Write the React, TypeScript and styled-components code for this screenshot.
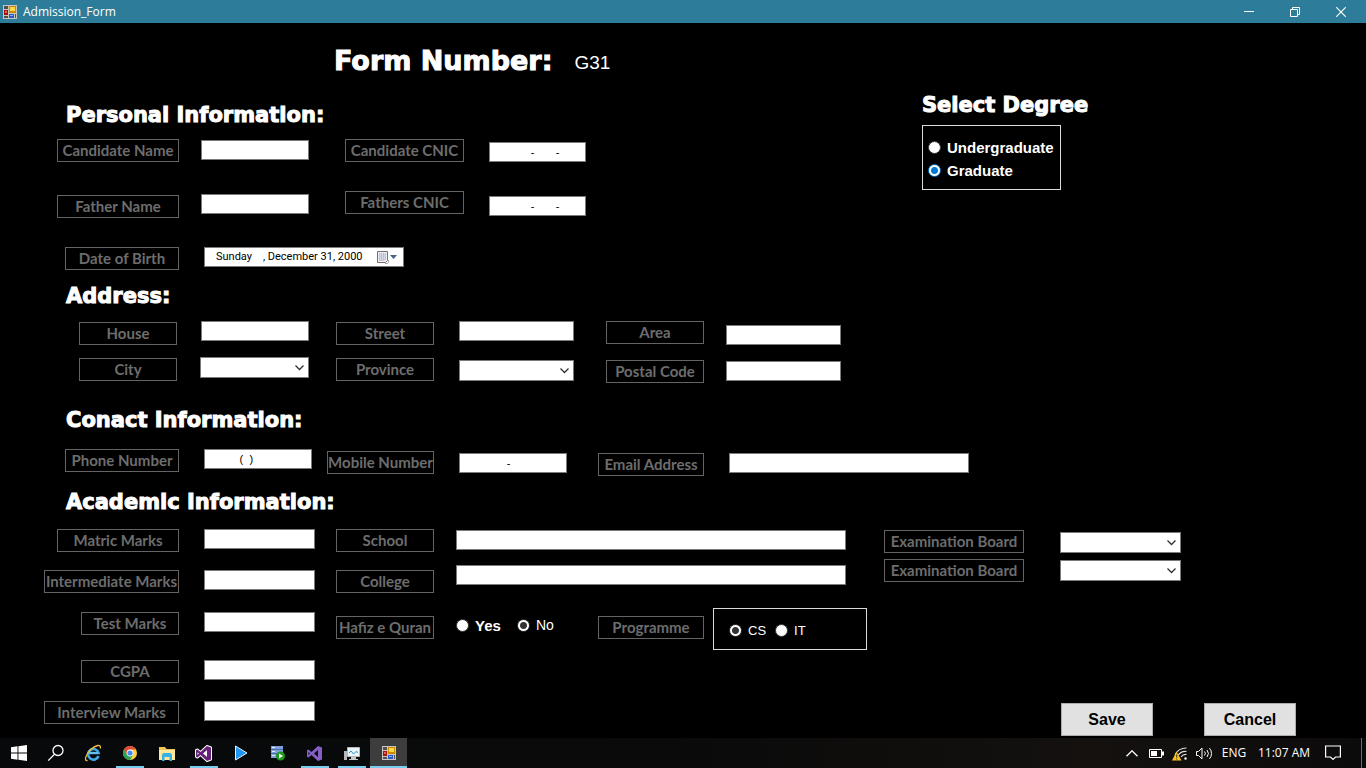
import React from "react";
import styled, { createGlobalStyle, css } from "styled-components";

const GlobalStyle = createGlobalStyle`
  * { box-sizing: border-box; }
  body { margin: 0; background: #000; color: #fff; font-family: "Liberation Sans", Arial, sans-serif; }
  button, input, select { font-family: inherit; border-radius: 0; }
`;

const Window = styled.div`
  min-height: 100vh;
  display: flex;
  flex-direction: column;
  background: #000;
`;

/* ---------- title bar ---------- */

const TitleBar = styled.header`
  display: flex;
  align-items: center;
  height: 23px;
  padding: 0 2px 0 3px;
  background: #2d7d9a;
`;

const WindowTitle = styled.span`
  flex: 1;
  padding-left: 6px;
  font: 12px/22px "Open Sans", "Noto Sans", sans-serif;
`;

const CaptionButton = styled.button`
  display: grid;
  place-items: center;
  width: 46px;
  height: 21px;
  padding: 0;
  border: 0;
  background: none;
  color: #fff;
`;

/* ---------- form layout ---------- */

const Form = styled.form`
  flex: 1;
  padding-left: 44px;
`;

const FormHeader = styled.div`
  display: flex;
  align-items: flex-start;
  gap: 22px;
  padding: 22px 0 18px 290px;
`;

const headingFont = css`
  margin: 0;
  font-family: "DejaVu Sans", Verdana, sans-serif;
  font-weight: 700;
  white-space: nowrap;
  -webkit-text-stroke: 1px #fff;
`;

const FormTitle = styled.h1`
  ${headingFont}
  font-size: 27px;
  line-height: 32px;
`;

const FormNumber = styled.output`
  font-size: 19px;
  line-height: 36px;
  height: 32px;
`;

const Heading = styled.h2`
  ${headingFont}
  font-size: 21px;
  line-height: 20px;
`;

const TopArea = styled.div`
  display: grid;
  grid-template-columns: 878px 1fr;
`;

const Section = styled.section<{ $top: number; $gap: number }>`
  padding-top: ${(p) => p.$top}px;
  & > ${Heading} {
    padding-left: 22px;
    margin-bottom: ${(p) => p.$gap}px;
  }
`;

const Fields = styled.div<{ $cols: string; $top?: number }>`
  display: grid;
  grid-template-columns: ${(p) => p.$cols};
  align-items: start;
  margin-top: ${(p) => p.$top ?? 0}px;
`;

const Stack = styled.div<{ $gap?: number; $top?: number; $width?: number }>`
  display: flex;
  flex-direction: column;
  align-items: ${(p) => (p.$width ? "flex-end" : "flex-start")};
  gap: ${(p) => p.$gap ?? 0}px;
  padding-top: ${(p) => p.$top ?? 0}px;
  width: ${(p) => (p.$width ? `${p.$width}px` : "auto")};
`;

const MarksGrid = styled.div`
  display: grid;
  grid-template-columns: 135px 111px;
  grid-template-rows: 41px 42px 48px 41px 23px;
  column-gap: 25px;
  justify-items: end;
  align-items: start;
`;

const RightColumn = styled.div`
  display: flex;
  flex-direction: column;
  justify-content: space-between;
  height: 207px;
`;

const Actions = styled.div`
  display: flex;
  gap: 51px;
  padding-left: 177px;
`;

/* ---------- controls ---------- */

const labelBox = css<{ $width: number }>`
  display: block;
  width: ${(p) => p.$width}px;
  height: 23px;
  border: 1px solid #646464;
  color: #6d6d6d;
  font: 700 15px/20px Lato, "Open Sans", sans-serif;
  text-align: center;
  white-space: nowrap;
`;

const Label = styled.label<{ $width: number }>`
  ${labelBox}
`;

const GroupLabel = styled.span<{ $width: number }>`
  ${labelBox}
`;

const TextBox = styled.input<{ $width: number }>`
  width: ${(p) => p.$width}px;
  height: 20px;
  padding: 0 1px;
  border: 1px solid #7a7a7a;
  background: #fff;
  color: #000;
  font-size: 11px;
  outline: 0;
`;

const SelectFrame = styled.div<{ $width: number }>`
  display: grid;
  width: ${(p) => p.$width}px;
  height: 21px;
  & > * {
    grid-area: 1 / 1;
  }
  & > svg {
    place-self: center end;
    margin-right: 5px;
    pointer-events: none;
  }
`;

const SelectBox = styled.select`
  appearance: none;
  width: 100%;
  border: 1px solid #7a7a7a;
  background: #fff;
  color: #000;
  font-size: 11px;
`;

const DateFrame = styled.div`
  display: flex;
  align-items: center;
  width: 200px;
  height: 20px;
  padding-left: 11px;
  border: 1px solid #7a7a7a;
  background: #fff;
`;

const DateText = styled.input`
  flex: 1;
  min-width: 0;
  padding: 0;
  border: 0;
  background: none;
  color: #000;
  font: 11px/16px Roboto, sans-serif;
  white-space: pre;
`;

const DateButton = styled.button`
  display: grid;
  place-items: center;
  width: 32px;
  height: 18px;
  padding: 0;
  border: 0;
  background: none;
`;

type RadioFrameProps = { $width?: number; $pad?: string; $rowGap?: number; $border?: boolean };

const RadioFrame = styled.fieldset<RadioFrameProps>`
  display: flex;
  flex-direction: ${(p) => (p.$rowGap ? "row" : "column")};
  gap: ${(p) => p.$rowGap ?? 0}px;
  margin: 0;
  min-width: 0;
  width: ${(p) => (p.$width ? `${p.$width}px` : "auto")};
  padding: ${(p) => p.$pad ?? "0"};
  border: ${(p) => (p.$border ? "1px solid #dcdcdc" : "0")};
`;

const RadioLabel = styled.label<{ $size: number; $bold?: boolean }>`
  display: flex;
  align-items: center;
  gap: 6px;
  font-size: ${(p) => p.$size}px;
  font-weight: ${(p) => (p.$bold ? 700 : 400)};
  line-height: 23px;
`;

const RadioDot = styled.input<{ $accent?: string }>`
  appearance: none;
  width: 13px;
  height: 13px;
  margin: 0;
  border: 1px solid #333;
  border-radius: 50%;
  background: #fff;
  &:checked {
    border-color: ${(p) => p.$accent ?? "#333"};
    background: radial-gradient(circle, ${(p) => p.$accent ?? "#333"} 3px, #fff 4px);
  }
`;

const ActionButton = styled.button`
  width: 92px;
  height: 33px;
  border: 1px solid #adadad;
  background: #e1e1e1;
  color: #000;
  font-size: 16px;
  font-weight: 700;
  padding: 0;
`;

/* ---------- taskbar ---------- */

const Taskbar = styled.footer`
  display: flex;
  height: 30px;
  background: linear-gradient(90deg, #07090a, #0a0a0a 50%, #14110f 80%, #0c0b0b);
`;

const TaskButton = styled.button<{ $open?: boolean; $active?: boolean }>`
  display: grid;
  place-items: center;
  width: 37px;
  height: 30px;
  padding: 0;
  border: 0;
  background: ${(p) => (p.$active ? "#3d3d3d" : "none")};
  box-shadow: ${(p) => (p.$active ? "inset 0 -2px #76cdf0" : "none")};
  color: #fff;
  ${(p) =>
    p.$open &&
    css`
      background: linear-gradient(#76cdf0, #76cdf0) center bottom / 28px 2px no-repeat;
    `}
`;

const Tray = styled.div`
  display: flex;
  align-items: center;
  margin-left: auto;
  padding-right: 4px;
  font: 12px/30px "Open Sans", "Noto Sans", sans-serif;
`;

const TrayButton = styled.button<{ $width: number }>`
  display: grid;
  place-items: center;
  width: ${(p) => p.$width}px;
  height: 30px;
  padding: 0;
  border: 0;
  background: none;
  color: #fff;
  font: inherit;
  white-space: nowrap;
`;

const ShowDesktop = styled.button`
  width: 1px;
  height: 30px;
  margin-left: 11px;
  padding: 0;
  border: 0;
  background: #6a6a6a;
`;

/* ---------- icons ---------- */

const FormIcon = ({ size = 14 }: { size?: number }) => (
  <svg width={size} height={size} viewBox="0 0 14 14" shapeRendering="crispEdges" aria-hidden="true">
    <path fill="#c9c5c0" d="M0 0h14v14H0z" />
    <path fill="#55504c" d="M1 1h4v3H1zM1 11h4v2H1zM12 9h1v4h-1z" />
    <path fill="#a51010" d="M1 5h4v5H1z" />
    <path fill="#e8645a" d="M2 6h2v2H2z" />
    <path fill="#c98a00" d="M6 1h7v7H6z" />
    <path fill="#ffd94a" d="M7 2h5v4H7z" />
    <path fill="#2b59c9" d="M6 9h5v4H6z" />
    <path fill="#86b0f5" d="M7 10h3v1H7z" />
  </svg>
);

const Chevron = () => (
  <svg width="9" height="6" viewBox="0 0 9 6" fill="none" stroke="#333" strokeWidth="1.300" aria-hidden="true">
    <path d="M.5 .5 4.5 4.5 8.5 .5" />
  </svg>
);

const CalendarIcon = () => (
  <svg width="20" height="13" viewBox="0 0 20 13" aria-hidden="true">
    <path d="M.5 .5h10v9l-2 2h-8z" fill="#eef0f4" stroke="#7a6f6c" />
    <path d="M2 3h7M2 5h7M2 7h7M2 9h6M2.500 2v8M4.500 2v8M6.500 2v8M8.500 2v7" stroke="#9aa6c4" strokeWidth="1" opacity=".6" />
    <path d="M8 12.500h2.500l1-1V9" fill="none" stroke="#aaa" />
    <path d="M13 4h7l-3.500 4z" fill="#44608c" />
  </svg>
);

const StartIcon = () => (
  <svg width="16" height="16" viewBox="0 0 16 16" fill="#fff" aria-hidden="true">
    <path d="M0 2.200 6.500 1.300V7.500H0zM7.400 1.200 16 0v7.500H7.400zM0 8.400h6.500v6.300L0 13.800zM7.400 8.400H16V16l-8.600-1.200z" />
  </svg>
);

const SearchIcon = () => (
  <svg width="18" height="18" viewBox="0 0 18 18" fill="none" stroke="#fff" strokeWidth="1.300" aria-hidden="true">
    <circle cx="11" cy="6.500" r="5" />
    <path d="M7.500 10.200 1.200 16.600" />
  </svg>
);

const IeIcon = () => (
  <svg width="18" height="18" viewBox="0 0 18 18" fill="none" aria-hidden="true">
    <path d="M14.500 12A5.300 5.300 0 1 1 14.600 9H5.500" stroke="#3fa9e8" strokeWidth="2.600" />
    <path d="M5 9h9" stroke="#7fd0f7" strokeWidth="1.200" />
    <path d="M3.500 16.500C-.5 17.500 2 9.500 7 5.200 11.500 1.300 17.500-.5 16.300 4.500" stroke="#f3c13a" strokeWidth="1.300" />
  </svg>
);

const ChromeIcon = () => (
  <svg width="14" height="14" viewBox="0 0 14 14" aria-hidden="true">
    <circle cx="7" cy="7" r="7" fill="#ffd040" />
    <path d="M.94 3.500A7 7 0 0 1 13.060 3.500H7L4 8.700z" fill="#e0483a" />
    <path d="M.94 3.500A7 7 0 0 0 7 14l3-5.300H4z" fill="#27a058" />
    <circle cx="7" cy="7" r="3.400" fill="#fff" />
    <circle cx="7" cy="7" r="2.600" fill="#4a87ee" />
  </svg>
);

const FolderIcon = () => (
  <svg width="16" height="15" viewBox="0 0 16 15" aria-hidden="true">
    <path d="M0 1h6l1.500 2H16v11H0z" fill="#f0c755" />
    <path d="M0 4h16v10H0z" fill="#fde79b" />
    <path d="M3 8.500 4.500 7h7L13 8.500V15h-2.500v-4h-5v4H3z" fill="#38b1e6" />
  </svg>
);

const VisualStudioIcon = ({ outlined }: { outlined?: boolean }) => (
  <svg width="17" height="17" viewBox="0 0 17 17" aria-hidden="true">
    {outlined && (
      <path
        d="M12 1l4 1.500v12L12 16 5.500 10 2.500 12.500 1 11.800V5.200l1.500-.7L5.500 7z"
        fill="none"
        stroke="#fff"
        strokeWidth="2"
        strokeLinejoin="round"
      />
    )}
    <path
      d="M12 1l4 1.500v12L12 16 5.500 10 2.500 12.500 1 11.800V5.200l1.500-.7L5.500 7zM12 5 8 8.500l4 3.500zM2.500 7v3L4 8.500z"
      fill={outlined ? "#68217a" : "#865fc5"}
      fillRule="evenodd"
    />
    {outlined && <path d="M12 5 8 8.500l4 3.500zM2.500 7v3L4 8.500z" fill="#fff" />}
  </svg>
);

const PlayIcon = () => (
  <svg width="14" height="16" viewBox="0 0 14 16" aria-hidden="true">
    <path d="M1.500 1 13 8 1.500 15z" fill="#2196f0" stroke="#e4f3ff" strokeLinejoin="round" />
  </svg>
);

const ServerIcon = () => (
  <svg width="15" height="16" viewBox="0 0 15 16" aria-hidden="true">
    <path d="M1 1h12v3H1zM1 5h12v3H1zM1 9h12v4H1z" fill="#7ea3dc" />
    <path d="M1 4h12v1H1zM1 8h12v1H1z" fill="#4d6ea8" />
    <path d="M2 2h3v1H2zM2 6h3v1H2zM2 10h3v1H2z" fill="#e6effc" />
    <circle cx="10.500" cy="11" r="4.500" fill="#1d9a1d" />
    <path d="M9 8.500 13 11l-4 2.500z" fill="#fff" />
  </svg>
);

const MonitorIcon = () => (
  <svg width="17" height="15" viewBox="0 0 17 15" aria-hidden="true">
    <path d="M1 5h3v9H1z" fill="#b7b7b7" />
    <path d="M4.500 1.500h12v9h-12z" fill="#e9f5fb" stroke="#b9b9b9" />
    <path d="M6 7l2-2 2.500 3L13 5.500l2 1" fill="none" stroke="#2893c8" />
    <path d="M8 11h5v2h2v1H6v-1h2z" fill="#c9c9c9" />
  </svg>
);

const TrayChevronIcon = () => (
  <svg width="12" height="7" viewBox="0 0 12 7" fill="none" stroke="#fff" strokeWidth="1.300" aria-hidden="true">
    <path d="M.5 6.300 6 .8l5.500 5.500" />
  </svg>
);

const BatteryIcon = () => (
  <svg width="15" height="9" viewBox="0 0 15 9" aria-hidden="true">
    <path d="M.5 .5h12v8H.5z" fill="none" stroke="#fff" />
    <path d="M2 2h6v5H2zM13 2.500h2v4h-2z" fill="#fff" />
  </svg>
);

const WifiIcon = () => (
  <svg width="16" height="15" viewBox="0 0 16 15" fill="none" aria-hidden="true">
    <path d="M3 8.500A13 13 0 0 1 14.500 2M6 9.500A9 9 0 0 1 14.500 5.500M9 11a6 6 0 0 1 5.500-2.500" stroke="#ddd" strokeWidth="1.200" />
    <circle cx="13.500" cy="12.500" r="1.200" fill="#fff" />
    <path d="M4.500 5.500 9.500 14.500H0z" fill="#f7c325" />
    <path d="M4.700 8.500v3M4.700 12.500v1" stroke="#332800" />
  </svg>
);

const SpeakerIcon = () => (
  <svg width="17" height="13" viewBox="0 0 17 13" fill="none" stroke="#fff" aria-hidden="true">
    <path d="M.5 4.500h2l3.500-3.500v11L2.500 8.500h-2zM8.500 4.500a3 3 0 0 1 0 4M11 3a5.500 5.500 0 0 1 0 7M13.500 1.200a8 8 0 0 1 0 10.600" />
  </svg>
);

const NotificationIcon = () => (
  <svg width="16" height="16" viewBox="0 0 16 16" fill="none" stroke="#fff" strokeWidth="1.200" aria-hidden="true">
    <path d="M.6 1h14.800v11H10.500L8 14.500 5.500 12H.6z" />
  </svg>
);

/* ---------- composed fields ---------- */

function Select({ id, width }: { id: string; width: number }) {
  return (
    <SelectFrame $width={width}>
      <SelectBox id={id} defaultValue="">
        <option value="" />
      </SelectBox>
      <Chevron />
    </SelectFrame>
  );
}

type RadioProps = {
  name: string;
  text: string;
  size: number;
  bold?: boolean;
  checked?: boolean;
  accent?: string;
};

function Radio({ name, text, size, bold, checked, accent }: RadioProps) {
  return (
    <RadioLabel $size={size} $bold={bold}>
      <RadioDot type="radio" name={name} defaultChecked={checked} $accent={accent} />
      {text}
    </RadioLabel>
  );
}

const marks = [
  { id: "matric", text: "Matric Marks", width: 122 },
  { id: "inter", text: "Intermediate Marks", width: 135 },
  { id: "test", text: "Test Marks", width: 98 },
  { id: "cgpa", text: "CGPA", width: 98 },
  { id: "interview", text: "Interview Marks", width: 135 },
];

const cnicMask = " ".repeat(13) + "-" + " ".repeat(7) + "-";
const phoneMask = " ".repeat(11) + "(  )";
const mobileMask = " ".repeat(15) + "-";

const tasks = [
  { name: "Start", icon: <StartIcon /> },
  { name: "Search", icon: <SearchIcon /> },
  { name: "Internet Explorer", icon: <IeIcon /> },
  { name: "Chrome", icon: <ChromeIcon />, open: true },
  { name: "File Explorer", icon: <FolderIcon /> },
  { name: "Visual Studio", icon: <VisualStudioIcon outlined />, open: true },
  { name: "Player", icon: <PlayIcon /> },
  { name: "Server", icon: <ServerIcon /> },
  { name: "Visual Studio 2019", icon: <VisualStudioIcon />, open: true },
  { name: "Monitor", icon: <MonitorIcon />, open: true },
  { name: "Admission_Form", icon: <FormIcon />, active: true },
];

export default function App() {
  return (
    <Window>
      <GlobalStyle />
      <TitleBar>
        <FormIcon />
        <WindowTitle>Admission_Form</WindowTitle>
        <CaptionButton type="button" aria-label="Minimize">
          <svg width="10" height="10" viewBox="0 0 10 10" stroke="#fff"><path d="M0 4.500h10" /></svg>
        </CaptionButton>
        <CaptionButton type="button" aria-label="Restore">
          <svg width="10" height="10" viewBox="0 0 10 10" fill="none" stroke="#fff"><path d="M.5 2.500h7v7h-7zM2.500 2.500v-2h7v7h-2" /></svg>
        </CaptionButton>
        <CaptionButton type="button" aria-label="Close">
          <svg width="10" height="10" viewBox="0 0 10 10" stroke="#fff" strokeWidth="1.200"><path d="M.3 .3l9.400 9.400M9.700 .3.3 9.700" /></svg>
        </CaptionButton>
      </TitleBar>

      <Form onSubmit={(e) => e.preventDefault()}>
        <FormHeader>
          <FormTitle>Form Number:</FormTitle>
          <FormNumber>G31</FormNumber>
        </FormHeader>

        <TopArea>
          <Section $top={10} $gap={14}>
            <Heading>Personal Information:</Heading>
            <Fields $cols="157px 144px 144px 97px">
              <Stack $gap={33} $width={135}>
                <Label htmlFor="name" $width={122}>Candidate Name</Label>
                <Label htmlFor="father" $width={122}>Father Name</Label>
              </Stack>
              <Stack $gap={34} $top={1}>
                <TextBox id="name" $width={108} />
                <TextBox id="father" $width={108} />
              </Stack>
              <Stack $gap={29}>
                <Label htmlFor="cnic" $width={119}>Candidate CNIC</Label>
                <Label htmlFor="father-cnic" $width={119}>Fathers CNIC</Label>
              </Stack>
              <Stack $gap={34} $top={3}>
                <TextBox id="cnic" $width={97} defaultValue={cnicMask} />
                <TextBox id="father-cnic" $width={97} defaultValue={cnicMask} />
              </Stack>
            </Fields>
            <Fields $cols="160px 200px" $top={29}>
              <Stack $width={135}>
                <Label htmlFor="birth" $width={114}>Date of Birth</Label>
              </Stack>
              <DateFrame>
                <DateText id="birth" defaultValue={"Sunday    , December 31, 2000"} />
                <DateButton type="button" aria-label="Open calendar">
                  <CalendarIcon />
                </DateButton>
              </DateFrame>
            </Fields>
          </Section>

          <Stack as="section" $gap={10}>
            <Heading>Select Degree</Heading>
            <RadioFrame $border $width={139} $pad="10px 0 7px 5px" aria-label="Degree">
              <Radio name="degree" text="Undergraduate" size={15} bold />
              <Radio name="degree" text="Graduate" size={15} bold checked accent="#0078d7" />
            </RadioFrame>
          </Stack>
        </TopArea>

        <Section $top={16} $gap={15}>
          <Heading>Address:</Heading>
          <Fields $cols="156px 136px 123px 147px 120px 115px">
            <Stack $gap={13} $top={1} $width={133}>
              <Label htmlFor="house" $width={98}>House</Label>
              <Label htmlFor="city" $width={98}>City</Label>
            </Stack>
            <Stack $gap={16} $width={109}>
              <TextBox id="house" $width={108} />
              <Select id="city" width={109} />
            </Stack>
            <Stack $gap={13} $top={1}>
              <Label htmlFor="street" $width={98}>Street</Label>
              <Label htmlFor="province" $width={98}>Province</Label>
            </Stack>
            <Stack $gap={19}>
              <TextBox id="street" $width={115} />
              <Select id="province" width={115} />
            </Stack>
            <Stack $gap={16}>
              <Label htmlFor="area" $width={98}>Area</Label>
              <Label htmlFor="postal" $width={98}>Postal Code</Label>
            </Stack>
            <Stack $gap={16} $top={4}>
              <TextBox id="area" $width={115} />
              <TextBox id="postal" $width={115} />
            </Stack>
          </Fields>
        </Section>

        <Section $top={27} $gap={19}>
          <Heading>Conact Information:</Heading>
          <Fields $cols="160px 123px 132px 139px 131px 240px">
            <Stack $width={135}>
              <Label htmlFor="phone" $width={114}>Phone Number</Label>
            </Stack>
            <TextBox id="phone" $width={108} defaultValue={phoneMask} />
            <Stack $top={2}>
              <Label htmlFor="mobile" $width={107}>Mobile Number</Label>
            </Stack>
            <Stack $top={4}>
              <TextBox id="mobile" $width={108} defaultValue={mobileMask} />
            </Stack>
            <Stack $top={4}>
              <Label htmlFor="email" $width={106}>Email Address</Label>
            </Stack>
            <Stack $top={4}>
              <TextBox id="email" type="email" $width={240} />
            </Stack>
          </Fields>
        </Section>

        <Section $top={16} $gap={17}>
          <Heading>Academic Information:</Heading>
          <Fields $cols="292px 548px 1fr">
            <MarksGrid>
              {marks.map((m) => (
                <React.Fragment key={m.id}>
                  <Label htmlFor={m.id} $width={m.width}>{m.text}</Label>
                  <TextBox id={m.id} $width={111} />
                </React.Fragment>
              ))}
            </MarksGrid>

            <div>
              <Fields $cols="120px 390px">
                <Stack $gap={18}>
                  <Label htmlFor="school" $width={98}>School</Label>
                  <Label htmlFor="college" $width={98}>College</Label>
                </Stack>
                <Stack $gap={15} $top={1}>
                  <TextBox id="school" $width={390} />
                  <TextBox id="college" $width={390} />
                </Stack>
              </Fields>
              <Fields $cols="120px 142px 115px 154px" $top={15}>
                <Stack $top={8}>
                  <GroupLabel id="hafiz" $width={98}>Hafiz e Quran</GroupLabel>
                </Stack>
                <RadioFrame $rowGap={16} $pad="6px 0 0" aria-labelledby="hafiz">
                  <Radio name="hafiz" text="Yes" size={15} bold />
                  <Radio name="hafiz" text="No" size={14} checked />
                </RadioFrame>
                <Stack $top={8}>
                  <GroupLabel id="programme" $width={106}>Programme</GroupLabel>
                </Stack>
                <RadioFrame $rowGap={9} $border $width={154} $pad="10px 0 7px 15px" aria-labelledby="programme">
                  <Radio name="programme" text="CS" size={13} checked />
                  <Radio name="programme" text="IT" size={13} />
                </RadioFrame>
              </Fields>
            </div>

            <RightColumn>
              <Fields $cols="176px 121px">
                <Stack $gap={6} $top={1}>
                  <Label htmlFor="board-school" $width={140}>Examination Board</Label>
                  <Label htmlFor="board-college" $width={140}>Examination Board</Label>
                </Stack>
                <Stack $gap={7} $top={3}>
                  <Select id="board-school" width={121} />
                  <Select id="board-college" width={121} />
                </Stack>
              </Fields>
              <Actions>
                <ActionButton type="submit">Save</ActionButton>
                <ActionButton type="button">Cancel</ActionButton>
              </Actions>
            </RightColumn>
          </Fields>
        </Section>
      </Form>

      <Taskbar>
        {tasks.map((t) => (
          <TaskButton key={t.name} type="button" aria-label={t.name} $open={t.open} $active={t.active}>
            {t.icon}
          </TaskButton>
        ))}
        <Tray>
          <TrayButton type="button" aria-label="Show hidden icons" $width={24}><TrayChevronIcon /></TrayButton>
          <TrayButton type="button" aria-label="Battery" $width={24}><BatteryIcon /></TrayButton>
          <TrayButton type="button" aria-label="Network" $width={24}><WifiIcon /></TrayButton>
          <TrayButton type="button" aria-label="Volume" $width={24}><SpeakerIcon /></TrayButton>
          <TrayButton type="button" $width={36}>ENG</TrayButton>
          <TrayButton type="button" $width={64}>11:07 AM</TrayButton>
          <TrayButton type="button" aria-label="Notifications" $width={34}><NotificationIcon /></TrayButton>
          <ShowDesktop type="button" aria-label="Show desktop" />
        </Tray>
      </Taskbar>
    </Window>
  );
}
